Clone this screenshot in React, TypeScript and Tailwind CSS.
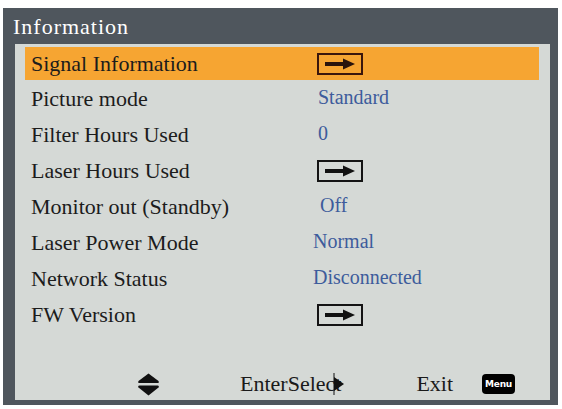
const ROWS: { label: string; value?: string; arrow?: boolean; offset: string }[] = [
  { label: "Signal Information", arrow: true, offset: "ml-0" },
  { label: "Picture mode", value: "Standard", offset: "ml-px" },
  { label: "Filter Hours Used", value: "0", offset: "ml-px" },
  { label: "Laser Hours Used", arrow: true, offset: "ml-0" },
  { label: "Monitor out (Standby)", value: "Off", offset: "ml-[3px]" },
  { label: "Laser Power Mode", value: "Normal", offset: "-ml-[4px]" },
  { label: "Network Status", value: "Disconnected", offset: "-ml-[4px]" },
  { label: "FW Version", arrow: true, offset: "ml-0" },
];

function ArrowBox({ active }: { active?: boolean }) {
  return (
    <span
      className={`flex h-[22px] w-[46px] items-center justify-center border-2 ${
        active ? "border-[#3a160c]" : "border-[#141414]"
      }`}
    >
      <svg width="34" height="12" viewBox="0 0 34 12" aria-hidden>
        <rect x="2" y="4" width="20" height="4" fill={active ? "#2a140c" : "#111"} />
        <polygon points="20,0.5 32,6 20,11.5" fill={active ? "#2a140c" : "#111"} />
      </svg>
    </span>
  );
}

function UpDown() {
  return (
    <svg width="23" height="23" viewBox="0 0 23 23" aria-hidden>
      <path d="M11.5 0.5 L21.5 8 Q22.5 10 20.5 10 L2.5 10 Q0.5 10 1.5 8 Z" fill="#111" />
      <path d="M2.5 12.5 L20.5 12.5 Q22.5 12.5 21.5 14.5 L11.5 22.5 L1.5 14.5 Q0.5 12.5 2.5 12.5 Z" fill="#111" />
    </svg>
  );
}

export default function App() {
  return (
    <div
      className="h-[409px] w-[562px] bg-white pl-[3px] pt-2"
      style={{ fontFamily: '"Liberation Serif", "Times New Roman", serif' }}
    >
      <div className="flex h-[397px] w-[555px] flex-col bg-[#4f565d]">
        <div className="flex h-[36px] items-center pl-[10px] text-[22px] tracking-[1px] text-white">
          Information
        </div>
        <div className="mb-[5px] ml-[12px] mr-[8px] flex flex-1 flex-col bg-[#d5d9d6] pt-[3px]">
          {ROWS.map((row, i) => {
            const active = i === 0;
            return (
              <div
                key={row.label}
                className={`ml-[10px] mr-[11px] flex items-center pl-[6px] ${
                  active ? "mb-px h-[33px] bg-[#f6a532]" : "h-[36px]"
                }`}
              >
                <span className="w-[286px] text-[22px] leading-none text-[#1c1c1c]">{row.label}</span>
                <span className={row.offset}>
                  {row.arrow ? (
                    <ArrowBox active={active} />
                  ) : (
                    <span className="text-[20px] leading-none text-[#3d5c9c]">{row.value}</span>
                  )}
                </span>
              </div>
            );
          })}

          {/* key hints */}
          <div className="mt-auto flex h-[32px] items-center text-[22px] leading-none text-[#1a1a1a]">
            <span className="ml-[122px]">
              <UpDown />
            </span>
            <span className="ml-[80px] flex items-center">
              EnterSelect
              <svg width="14" height="22" viewBox="0 0 14 22" className="-ml-[10px]" aria-hidden>
                <line x1="3" y1="0" x2="3" y2="22" stroke="#111" strokeWidth="1" />
                <polygon points="3,4 13,11 3,18" fill="#111" />
              </svg>
            </span>
            <span className="ml-[71px]">Exit</span>
            <span
              className="ml-[29px] flex h-[20px] w-[33px] items-center justify-center rounded-[4px] bg-black text-[9px] font-bold tracking-tight text-white"
              style={{ fontFamily: '"DejaVu Sans", sans-serif' }}
            >
              Menu
            </span>
          </div>
        </div>
      </div>
    </div>
  );
}
